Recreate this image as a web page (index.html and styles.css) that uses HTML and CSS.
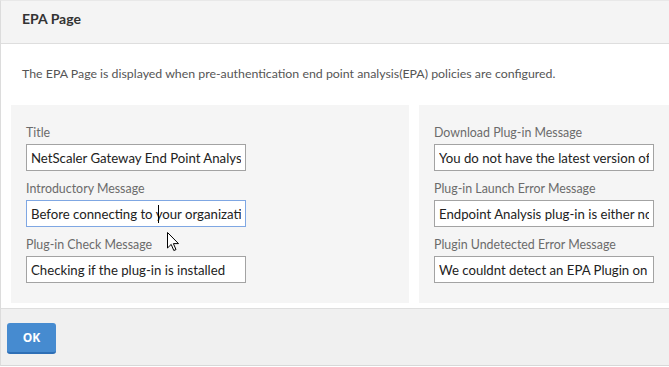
FILE: index.html
```html
<!DOCTYPE html>
<html lang="en">
<head>
  <meta charset="UTF-8" />
  <title>EPA Page</title>
  <link rel="stylesheet" href="styles.css">
</head>
<body>
  <div class="dialog">
    <div class="dialog-header">EPA Page</div>

    <div class="dialog-body">
      <p class="intro">The EPA Page is displayed when pre-authentication end point analysis(EPA) policies are configured.</p>

      <div class="columns">
        <!-- Left column -->
        <div class="panel">
          <div class="field">
            <label>Title</label>
            <input type="text" value="NetScaler Gateway End Point Analysis" />
          </div>
          <div class="field">
            <label>Introductory Message</label>
            <div class="input-wrap">
              <input class="focused" type="text" value="Before connecting to your organization's network" />
              <span class="caret"></span>
            </div>
          </div>
          <div class="field">
            <label>Plug-in Check Message</label>
            <input type="text" value="Checking if the plug-in is installed" />
          </div>
        </div>

        <!-- Right column -->
        <div class="panel">
          <div class="field">
            <label>Download Plug-in Message</label>
            <input type="text" value="You do not have the latest version of the plug-in" />
          </div>
          <div class="field">
            <label>Plug-in Launch Error Message</label>
            <input type="text" value="Endpoint Analysis plug-in is either not installed" />
          </div>
          <div class="field">
            <label>Plugin Undetected Error Message</label>
            <input type="text" value="We couldnt detect an EPA Plugin on your device" />
          </div>
        </div>
      </div>
    </div>

    <div class="dialog-footer">
      <button class="btn-ok">OK</button>
    </div>
  </div>

  <!-- mouse pointer from the screenshot -->
  <svg class="pointer" width="13" height="20" viewBox="0 0 13 20">
    <path d="M0.5 0.5 L0.5 16 L4.2 12.4 L6.8 18.5 L9 17.6 L6.4 11.6 L11.5 11.6 Z" fill="#fff" stroke="#000" stroke-width="1" stroke-linejoin="round"/>
  </svg>
</body>
</html>
```

FILE: styles.css
```css
body {
  margin: 0;
  font-family: Lato, "Liberation Sans", sans-serif;
  background-color: #fff;
  color: #333;
  overflow: hidden;
}
.dialog {
  width: 840px;
  border-left: 1px solid #dcdcdc;
  border-top: 1px solid #e8e8e8;
  border-bottom: 1px solid #d8d8d8;
}
.dialog-header {
  height: 42px;
  line-height: 36px;
  padding-left: 21px;
  background-color: #f4f4f4;
  border-bottom: 1px solid #dedede;
  font-size: 14px;
  font-weight: bold;
  color: #333;
}
.dialog-body {
  padding: 22px 10px 5px 10px;
  border-bottom: 1px solid #dedede;
}
.intro {
  margin: 0 0 23px 11px;
  font-size: 12.35px;
  line-height: 16px;
  color: #555;
}
.columns {
  display: flex;
  gap: 10px;
}
.panel {
  width: 368px;
  padding: 20px 15px;
  background-color: #f5f5f5;
  display: flex;
  flex-direction: column;
  gap: 10px;
}
.field {
  display: flex;
  flex-direction: column;
  gap: 3px;
}
label {
  font-size: 12.4px;
  line-height: 16px;
  color: #6b6b6b;
}
.input-wrap {
  position: relative;
  width: 220px;
}
input {
  box-sizing: border-box;
  width: 220px;
  height: 27px;
  padding: 0 4px;
  margin: 0;
  font-family: Lato, "Liberation Sans", sans-serif;
  font-size: 13.2px;
  color: #222;
  background-color: #fff;
  border: 1px solid #a3a3a3;
  border-radius: 0;
  outline: none;
}
input.focused {
  border-color: #7fa7e3;
}
.caret {
  position: absolute;
  left: 132px;
  top: 5px;
  width: 1px;
  height: 18px;
  background-color: #000;
}
.dialog-footer {
  padding: 14px 6px 11px 6px;
  background-color: #f0f0f0;
}
.btn-ok {
  display: block;
  width: 49px;
  height: 31px;
  padding: 0;
  font-family: "Open Sans", "Liberation Sans", sans-serif;
  font-size: 12px;
  font-weight: bold;
  color: #fff;
  background-color: #468bd0;
  border: none;
  border-bottom: 2px solid #2e6fb6;
  border-radius: 3px;
}
.pointer {
  position: absolute;
  left: 167px;
  top: 232px;
}
```
